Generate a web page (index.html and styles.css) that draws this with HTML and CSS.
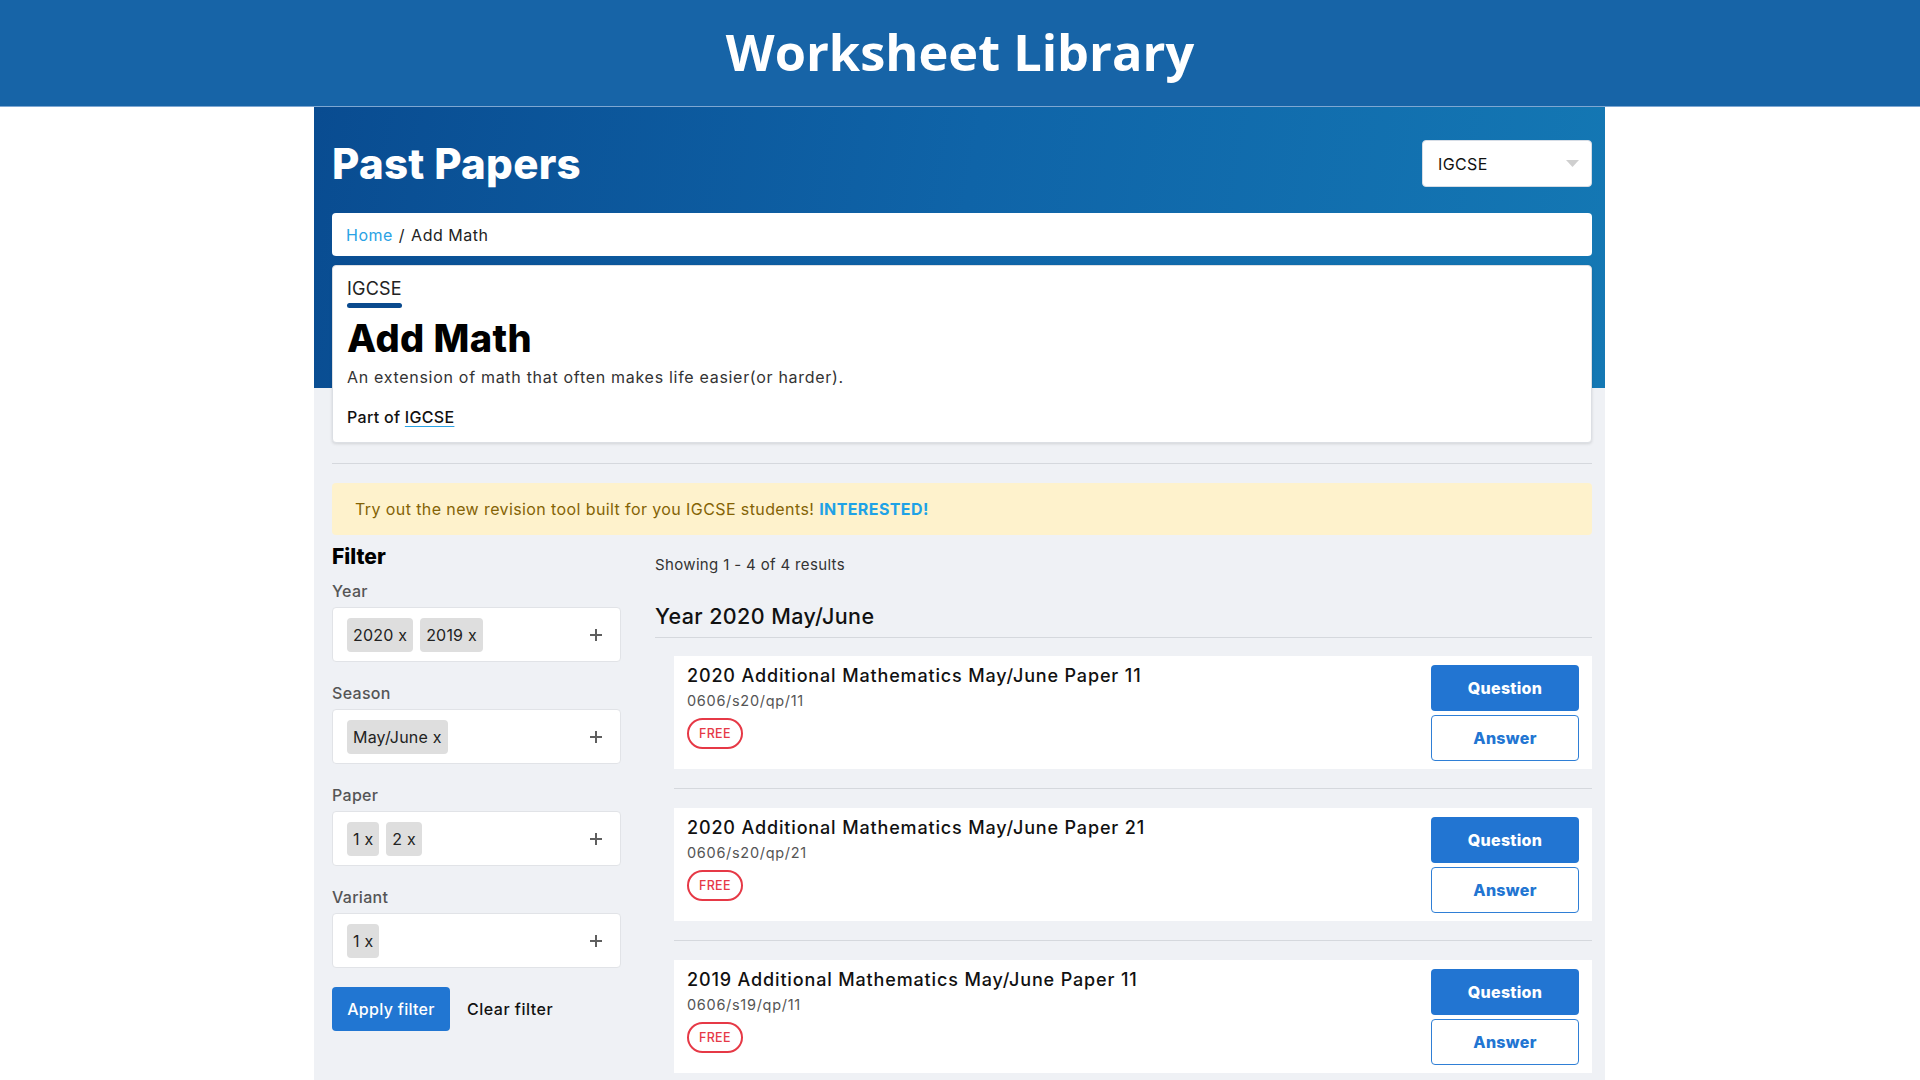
FILE: index.html
```
<!DOCTYPE html>
<html lang="en">
<head>
<meta charset="utf-8">
<title>Worksheet Library</title>
<link rel="stylesheet" href="styles.css">
</head>
<body>
<header class="topbar"><h1 class="site-title">Worksheet Library</h1></header>
<main class="container">
  <div class="hero-row">
    <h2 class="page-title">Past Papers</h2>
    <div class="select">
      <span>IGCSE</span>
      <svg class="caret" width="13" height="7" viewBox="0 0 13 7"><path d="M0 0H13L6.5 7Z" fill="#cfcfcf"/></svg>
    </div>
  </div>
  <nav class="breadcrumb"><a class="crumb-link">Home</a><span class="sep">/</span><span>Add Math</span></nav>
  <section class="subject-card">
    <div class="tab">IGCSE</div>
    <h3 class="subject-title">Add Math</h3>
    <p class="subject-desc">An extension of math that often makes life easier(or harder).</p>
    <p class="part-of">Part of <a class="part-link">IGCSE</a></p>
  </section>
  <hr class="rule">
  <div class="alert">Try out the new revision tool built for you IGCSE students! <a class="alert-link">INTERESTED!</a></div>
  <div class="layout">
    <aside class="filters">
      <h4 class="filter-title">Filter</h4>
      <div class="group">
        <div class="label">Year</div>
        <div class="box"><div class="chips"><span class="chip">2020 x</span><span class="chip">2019 x</span></div><svg class="plus" width="12" height="12" viewBox="0 0 12 12"><path d="M6 0V12M0 6H12" stroke="#5f5f5f" stroke-width="2"/></svg></div>
      </div>
      <div class="group">
        <div class="label">Season</div>
        <div class="box"><div class="chips"><span class="chip">May/June x</span></div><svg class="plus" width="12" height="12" viewBox="0 0 12 12"><path d="M6 0V12M0 6H12" stroke="#5f5f5f" stroke-width="2"/></svg></div>
      </div>
      <div class="group">
        <div class="label">Paper</div>
        <div class="box"><div class="chips"><span class="chip">1 x</span><span class="chip">2 x</span></div><svg class="plus" width="12" height="12" viewBox="0 0 12 12"><path d="M6 0V12M0 6H12" stroke="#5f5f5f" stroke-width="2"/></svg></div>
      </div>
      <div class="group">
        <div class="label">Variant</div>
        <div class="box"><div class="chips"><span class="chip">1 x</span></div><svg class="plus" width="12" height="12" viewBox="0 0 12 12"><path d="M6 0V12M0 6H12" stroke="#5f5f5f" stroke-width="2"/></svg></div>
      </div>
      <div class="actions"><button class="btn-apply">Apply filter</button><button class="btn-clear">Clear filter</button></div>
    </aside>
    <section class="results">
      <div class="count">Showing 1 - 4 of 4 results</div>
      <h4 class="year-heading">Year 2020 May/June</h4>
      <div class="paper">
        <div class="paper-info">
          <div class="paper-title">2020 Additional Mathematics May/June Paper 11</div>
          <div class="paper-code">0606/s20/qp/11</div>
          <span class="badge">FREE</span>
        </div>
        <div class="paper-btns"><button class="btn-q">Question</button><button class="btn-a">Answer</button></div>
      </div>
      <hr class="paper-rule">
      <div class="paper">
        <div class="paper-info">
          <div class="paper-title">2020 Additional Mathematics May/June Paper 21</div>
          <div class="paper-code">0606/s20/qp/21</div>
          <span class="badge">FREE</span>
        </div>
        <div class="paper-btns"><button class="btn-q">Question</button><button class="btn-a">Answer</button></div>
      </div>
      <hr class="paper-rule">
      <div class="paper">
        <div class="paper-info">
          <div class="paper-title">2019 Additional Mathematics May/June Paper 11</div>
          <div class="paper-code">0606/s19/qp/11</div>
          <span class="badge">FREE</span>
        </div>
        <div class="paper-btns"><button class="btn-q">Question</button><button class="btn-a">Answer</button></div>
      </div>
    </section>
  </div>
</main>
</body>
</html>
```

FILE: styles.css
```
* { box-sizing: border-box; }
html, body { margin: 0; padding: 0; }
body {
  background: #ffffff;
  font-family: Inter, "Noto Sans", sans-serif;
  color: #222;
  overflow: hidden;
}
.topbar {
  height: 107px;
  background: #1764a7;
  border-bottom: 1px solid #7ea7d2;
  display: flex;
  align-items: center;
  justify-content: center;
}
.site-title {
  margin: 0 0 2px;
  font-family: "Open Sans", sans-serif;
  font-weight: 700;
  font-size: 50.5px;
  line-height: 1;
  color: #fff;
}
.container {
  width: 1291px;
  margin: 0 0 0 314px;
  min-height: calc(100vh - 107px);
  padding: 0 13px 40px 18px;
  background:
    linear-gradient(100deg, #094c91 0%, #0f64a8 50%, #1478b4 100%) top left / 100% 281px no-repeat,
    #eff1f5;
}
.hero-row {
  display: flex;
  align-items: center;
  justify-content: space-between;
  padding-top: 33px;
}
.page-title {
  margin: 0;
  font-size: 42px;
  line-height: 47px;
  font-weight: 800;
  color: #fff;
  letter-spacing: 0.3px;
}
.select {
  width: 170px;
  height: 47px;
  background: #fff;
  border: 1px solid #d6dde6;
  border-radius: 4px;
  display: flex;
  align-items: center;
  justify-content: space-between;
  padding: 0 12px 0 15px;
  font-size: 16px;
  letter-spacing: 0.4px;
  color: #111;
}
.breadcrumb {
  margin-top: 26px;
  height: 43px;
  background: #fff;
  border-radius: 4px;
  display: flex;
  align-items: center;
  padding: 0 14px;
  font-size: 16px;
  letter-spacing: 0.5px;
  color: #222;
}
.crumb-link { color: #2aa2e4; }
.sep { margin: 0 6px; }
.subject-card {
  margin-top: 9px;
  background: #fff;
  border: 1px solid #dcdfe4;
  border-radius: 4px;
  box-shadow: 0 1px 3px rgba(0,0,0,0.12);
  padding: 12px 14px 13px;
}
.tab {
  display: inline-block;
  font-size: 18px;
  line-height: 22px;
  color: #222;
  letter-spacing: 0.2px;
}
.tab::after {
  content: "";
  display: block;
  height: 5px;
  margin-top: 3px;
  border-radius: 3px;
  background: #0a4a8e;
}
.subject-title {
  margin: 8px 0 0;
  font-size: 38px;
  line-height: 44px;
  font-weight: 800;
  color: #000;
  letter-spacing: 0.4px;
}
.subject-desc {
  margin: 5px 0 0;
  font-size: 16px;
  line-height: 24px;
  color: #333;
  letter-spacing: 0.7px;
}
.part-of {
  margin: 16px 0 0;
  font-size: 16px;
  line-height: 24px;
  font-weight: 500;
  color: #111;
  letter-spacing: 0.3px;
}
.part-link {
  text-decoration: underline;
  text-decoration-color: #2aa2e4;
  text-underline-offset: 3px;
}
.rule {
  margin: 20px 0 0;
  border: 0;
  border-top: 1px solid #d5d8dd;
}
.alert {
  margin-top: 19px;
  height: 52px;
  background: #fef2cc;
  border-radius: 4px;
  padding: 0 23px;
  display: flex;
  align-items: center;
  font-size: 16px;
  color: #846305;
  white-space: pre;
  letter-spacing: 0.4px;
}
.alert-link { color: #1fa2e6; font-weight: 700; }
.layout {
  display: grid;
  grid-template-columns: 289px 1fr;
  column-gap: 34px;
  margin-top: 9px;
}
.filter-title {
  margin: 0;
  font-size: 21px;
  line-height: 26px;
  font-weight: 800;
  color: #000;
}
.group { margin-top: 9px; }
.group + .group { margin-top: 19px; }
.label {
  font-size: 16px;
  line-height: 24px;
  font-weight: 500;
  color: #555;
  margin-bottom: 4px;
  letter-spacing: 0.3px;
}
.box {
  height: 55px;
  background: #fff;
  border: 1px solid #e1e3e7;
  border-radius: 4px;
  display: flex;
  align-items: center;
  justify-content: space-between;
  padding: 0 18px 0 14px;
}
.chips { display: flex; gap: 7px; }
.chip {
  height: 34px;
  display: flex;
  align-items: center;
  padding: 0 6px;
  background: #dedede;
  border-radius: 4px;
  font-size: 16px;
  color: #222;
  letter-spacing: 0.2px;
}
.plus { display: block; flex: none; }
.actions {
  margin-top: 19px;
  display: flex;
  align-items: center;
  gap: 17px;
}
.btn-apply {
  width: 118px;
  height: 44px;
  border: 0;
  border-radius: 4px;
  background: #2176d2;
  color: #fff;
  font-family: inherit;
  font-size: 16px;
  font-weight: 500;
  letter-spacing: 0.3px;
  padding: 0;
}
.btn-clear {
  border: 0;
  background: none;
  padding: 0;
  font-family: inherit;
  font-size: 16px;
  font-weight: 500;
  color: #111;
  letter-spacing: 0.5px;
}
.results { padding-top: 10px; }
.count {
  font-size: 15px;
  line-height: 22px;
  color: #333;
  letter-spacing: 0.35px;
}
.year-heading {
  margin: 25px 0 0;
  font-size: 21.5px;
  line-height: 30px;
  font-weight: 500;
  color: #111;
  letter-spacing: 0.4px;
  padding-bottom: 6px;
  border-bottom: 1px solid #d5d8dd;
}
.paper {
  margin: 18px 0 0 19px;
  height: 113px;
  background: #fff;
  display: flex;
  justify-content: space-between;
  padding: 9px 13px 8px 13px;
}
.paper-rule {
  margin: 19px 0 0 19px;
  border: 0;
  border-top: 1px solid #d5d8dd;
}
.paper-rule + .paper { margin-top: 19px; }
.paper-info { display: flex; flex-direction: column; align-items: flex-start; }
.paper-title {
  font-size: 18px;
  line-height: 22px;
  font-weight: 500;
  color: #111;
  letter-spacing: 0.85px;
}
.paper-code {
  margin-top: 3px;
  font-size: 14.5px;
  line-height: 22px;
  color: #555;
  letter-spacing: 0.7px;
}
.badge {
  margin-top: 6px;
  height: 31px;
  padding: 0 10px;
  display: flex;
  align-items: center;
  border: 2px solid #e63946;
  border-radius: 16px;
  color: #e63946;
  font-size: 12.5px;
  font-weight: 500;
  letter-spacing: 0.3px;
}
.paper-btns { display: flex; flex-direction: column; gap: 4px; }
.btn-q, .btn-a {
  width: 148px;
  height: 46px;
  border-radius: 4px;
  font-family: inherit;
  font-size: 16px;
  font-weight: 800;
  letter-spacing: 0.3px;
  padding: 0;
}
.btn-q { background: #2275d2; border: 0; color: #fff; }
.btn-a { background: #fff; border: 1px solid #2f7fd6; color: #2275d2; }
```
